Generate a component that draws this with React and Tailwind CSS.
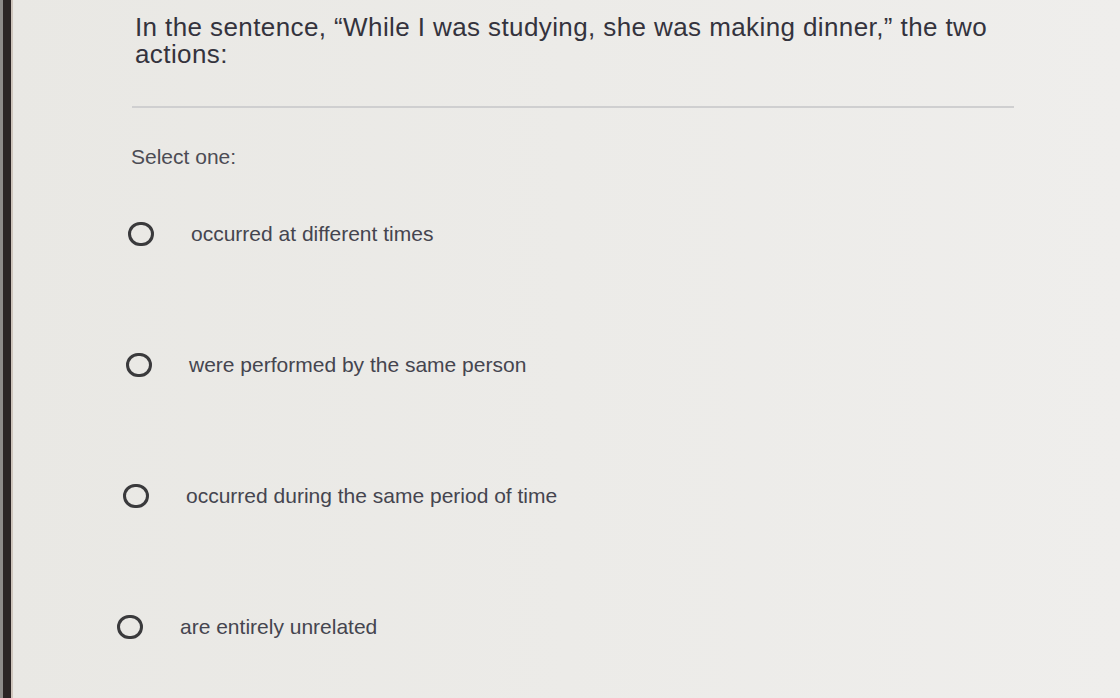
const options = [
  { text: "occurred at different times", indent: "ml-[115px]" },
  { text: "were performed by the same person", indent: "ml-[113px]" },
  { text: "occurred during the same period of time", indent: "ml-[110px]" },
  { text: "are entirely unrelated", indent: "ml-[104px]" },
]

function Radio() {
  return <span className="block h-[24px] w-[26px] shrink-0 rounded-full border-[3px] border-[#3a3a3c]"></span>
}

export default function App() {
  return (
    <div className="flex h-[698px] w-[1120px] overflow-hidden bg-gradient-to-r from-[#e9e8e4] via-[#ecebe8] to-[#efeeec] font-['Liberation_Sans',Arial,sans-serif]">
      {/* screen bezel */}
      <div className="flex h-full shrink-0">
        <div className="w-[3px] bg-[#8d8a88]"></div>
        <div className="w-[8px] bg-[#2b2424]"></div>
        <div className="w-[2px] bg-[#cfc6bd]"></div>
      </div>

      <div className="flex-1">
        <div className="ml-[122px] pt-[14px] text-[26px] leading-[27px] tracking-[0.4px] text-[#34333d]">
          In the sentence, “While I was studying, she was making dinner,” the two
          <br />
          actions:
        </div>

        <div className="ml-[119px] mt-[38px] h-[2px] w-[882px] bg-[#cfcfd0]"></div>

        <div className="ml-[118px] mt-[37px] text-[21px] leading-[24px] text-[#4c4c54]">
          Select one:
        </div>

        <div className="mt-[53px] flex flex-col gap-[107px]">
          {options.map((o) => (
            <div key={o.text} className={`flex items-center gap-[37px] ${o.indent}`}>
              <Radio />
              <span className="text-[21px] leading-[24px] text-[#45454f]">{o.text}</span>
            </div>
          ))}
        </div>
      </div>
    </div>
  )
}
